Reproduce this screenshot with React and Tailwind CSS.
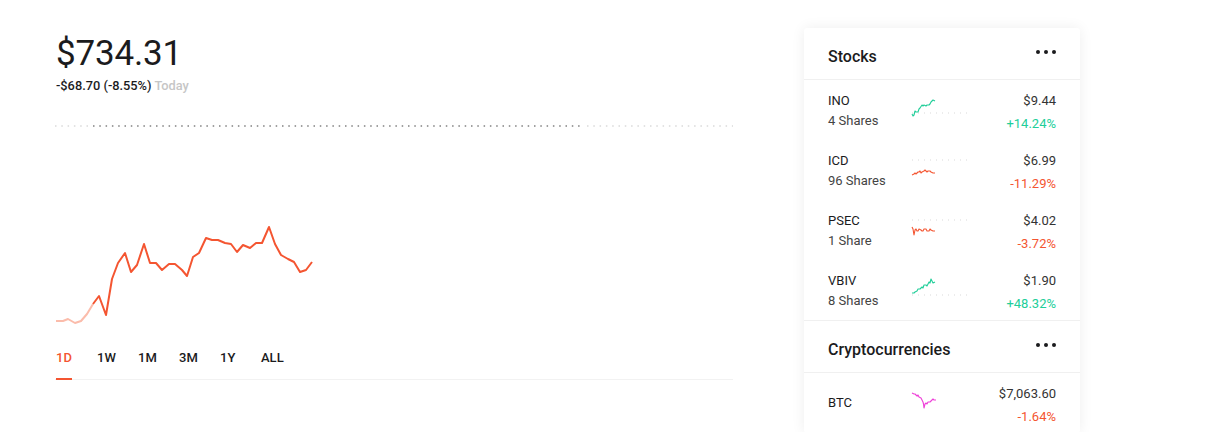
import React from "react";

const RED = "#f45531";
const GREEN = "#21ce99";

const chartPoints = [
  [1, 202], [8, 202], [13, 200], [20, 204], [26, 202], [32, 195], [38, 185],
  [44, 177], [51, 196], [57, 160], [63, 144], [70, 134], [76, 153], [82, 146],
  [89, 125], [95, 144], [101, 144], [107, 151], [114, 145], [120, 145],
  [127, 151], [132, 157], [138, 138], [144, 134], [151, 119], [157, 121],
  [163, 121], [170, 124], [176, 125], [182, 133], [188, 126], [195, 129],
  [201, 124], [207, 124], [214, 108], [220, 125], [226, 136], [233, 140],
  [239, 143], [245, 153], [251, 151], [257, 143],
];

const stocks = [
  {
    symbol: "INO", shares: "4 Shares", price: "$9.44", change: "+14.24%", up: true, base: 33,
    line: [[1, 34], [2, 36], [3, 35], [4, 31], [5, 32], [7, 32], [8, 29], [9, 28], [11, 25], [12, 26], [13, 25], [15, 26], [16, 25], [18, 25], [19, 24], [20, 22], [21, 21], [22, 20], [24, 21]],
  },
  {
    symbol: "ICD", shares: "96 Shares", price: "$6.99", change: "-11.29%", up: false, base: 20,
    line: [[1, 35], [3, 34], [4, 33], [5, 34], [7, 32], [8, 32], [9, 31], [10, 33], [11, 32], [13, 31], [14, 30], [16, 32], [17, 31], [19, 31], [20, 32], [22, 33], [24, 33]],
  },
  {
    symbol: "PSEC", shares: "1 Share", price: "$4.02", change: "-3.72%", up: false, base: 20,
    line: [[1, 27], [2, 29], [3, 35], [4, 30], [5, 29], [6, 31], [7, 31], [8, 29], [10, 30], [11, 31], [12, 31], [13, 29], [15, 29], [16, 31], [18, 31], [19, 29], [20, 30], [22, 31], [24, 31]],
  },
  {
    symbol: "VBIV", shares: "8 Shares", price: "$1.90", change: "+48.32%", up: true, base: 35,
    line: [[1, 33], [3, 33], [4, 32], [6, 31], [7, 29], [9, 29], [11, 27], [12, 28], [13, 25], [15, 25], [16, 26], [17, 24], [18, 22], [19, 23], [20, 19], [21, 21], [22, 23], [24, 22]],
  },
];

const btcLine = [[1, 20], [3, 21], [4, 21], [6, 23], [7, 22], [8, 24], [10, 25], [11, 27], [12, 29], [12.5, 31], [13, 35], [14, 31], [15, 30], [16, 31], [17, 29], [19, 29], [20, 28], [21, 27], [22, 26], [23, 27], [25, 27]];

const pts = (arr) => arr.map((p) => p.join(",")).join(" ");

function Sparkline({ line, color, base }) {
  return (
    <svg width="58" height="60" viewBox="0 0 58 60" className="shrink-0">
      {base != null && (
        <line x1="1" y1={base} x2="57" y2={base} stroke="#d9d9d9" strokeWidth="1" strokeDasharray="1 5" />
      )}
      <polyline points={pts(line)} fill="none" stroke={color} strokeWidth="1.1" strokeLinejoin="round" />
    </svg>
  );
}

function MoreDots() {
  return (
    <div className="flex gap-[4px] items-center">
      <span className="w-[4px] h-[4px] rounded-full bg-[#1b1b1d]" />
      <span className="w-[4px] h-[4px] rounded-full bg-[#1b1b1d]" />
      <span className="w-[4px] h-[4px] rounded-full bg-[#1b1b1d]" />
    </div>
  );
}

function SectionHeader({ title }) {
  return (
    <div className="h-[52px] px-6 flex justify-between border-b border-[#f0f0f0]">
      <h2 className="pt-[18px] text-[16px] leading-[22px] font-medium text-[#1b1b1d]">{title}</h2>
      <div className="pt-[22px]">
        <MoreDots />
      </div>
    </div>
  );
}

export default function App() {
  const split = chartPoints.findIndex((p) => p[0] === 38);
  const tabs = ["1D", "1W", "1M", "3M", "1Y", "ALL"];

  return (
    <div className="min-h-screen bg-white font-['Roboto',sans-serif] text-[#1b1b1d] flex pl-[55px] overflow-hidden">
      {/* Portfolio chart */}
      <div className="w-[678px] pt-[34px]">
        <h1 className="text-[35px] leading-[40px] font-normal pl-px tracking-[-0.2px]">$734.31</h1>
        <p className="mt-[3px] text-[12.8px] leading-[18px] font-medium pl-px">
          -$68.70 (-8.55%) <span className="text-[#c6c6c6]">Today</span>
        </p>

        <svg width="678" height="215" viewBox="0 0 678 215" className="mt-[24px] block">
          <line x1="0" y1="7" x2="37" y2="7" stroke="#e3e3e3" strokeWidth="2" strokeDasharray="1.5 4.8" />
          <line x1="38" y1="7" x2="527" y2="7" stroke="#a0a0a0" strokeWidth="2" strokeDasharray="1.5 4.8" />
          <line x1="532" y1="7" x2="678" y2="7" stroke="#e3e3e3" strokeWidth="2" strokeDasharray="1.5 4.8" />
          <polyline points={pts(chartPoints.slice(0, split + 1))} fill="none" stroke="#fbbcab" strokeWidth="2" strokeLinejoin="round" />
          <polyline points={pts(chartPoints.slice(split))} fill="none" stroke={RED} strokeWidth="2" strokeLinejoin="round" />
        </svg>

        {/* Range tabs */}
        <div className="mt-[11px] flex border-b border-[#f2f2f2] pl-px">
          {tabs.map((t, i) => (
            <div key={t} className="w-[41px]">
              <span
                className={
                  i === 0
                    ? "inline-block pb-[10px] text-[13px] leading-[20px] font-medium text-[#f45531] border-b-2 border-[#f45531] -mb-px"
                    : "inline-block pb-[10px] text-[13px] leading-[20px] font-medium text-[#1b1b1d]"
                }
              >
                {t}
              </span>
            </div>
          ))}
        </div>
      </div>

      {/* Watchlist card */}
      <aside className="ml-[71px] mt-[28px] w-[276px] bg-white rounded-[3px] shadow-[0_0_14px_rgba(0,0,0,0.07)] self-start">
        <SectionHeader title="Stocks" />
        <ul className="border-b border-[#f0f0f0]">
          {stocks.map((s) => (
            <li key={s.symbol} className="h-[60px] px-6 flex">
              <div className="w-[83px] pt-[11px] text-[13px] leading-[20px]">
                <div className="font-normal text-[#1b1b1d]">{s.symbol}</div>
                <div className="text-[#444]">{s.shares}</div>
              </div>
              <Sparkline line={s.line} base={s.base} color={s.up ? GREEN : RED} />
              <div className="flex-1 text-right pt-[11px] text-[13px] leading-[20px]">
                <div className="text-[#333]">{s.price}</div>
                <div className={s.up ? "mt-[3px] text-[#21ce99]" : "mt-[3px] text-[#f45531]"}>{s.change}</div>
              </div>
            </li>
          ))}
        </ul>

        <SectionHeader title="Cryptocurrencies" />
        <div className="h-[60px] px-6 flex">
          <div className="w-[83px] flex items-center text-[13px] leading-[20px] font-normal">BTC</div>
          <Sparkline line={btcLine} color="#ee3fd8" />
          <div className="flex-1 text-right pt-[11px] text-[13px] leading-[20px]">
            <div className="text-[#333]">$7,063.60</div>
            <div className="mt-[3px] text-[#f45531]">-1.64%</div>
          </div>
        </div>
      </aside>
    </div>
  );
}
